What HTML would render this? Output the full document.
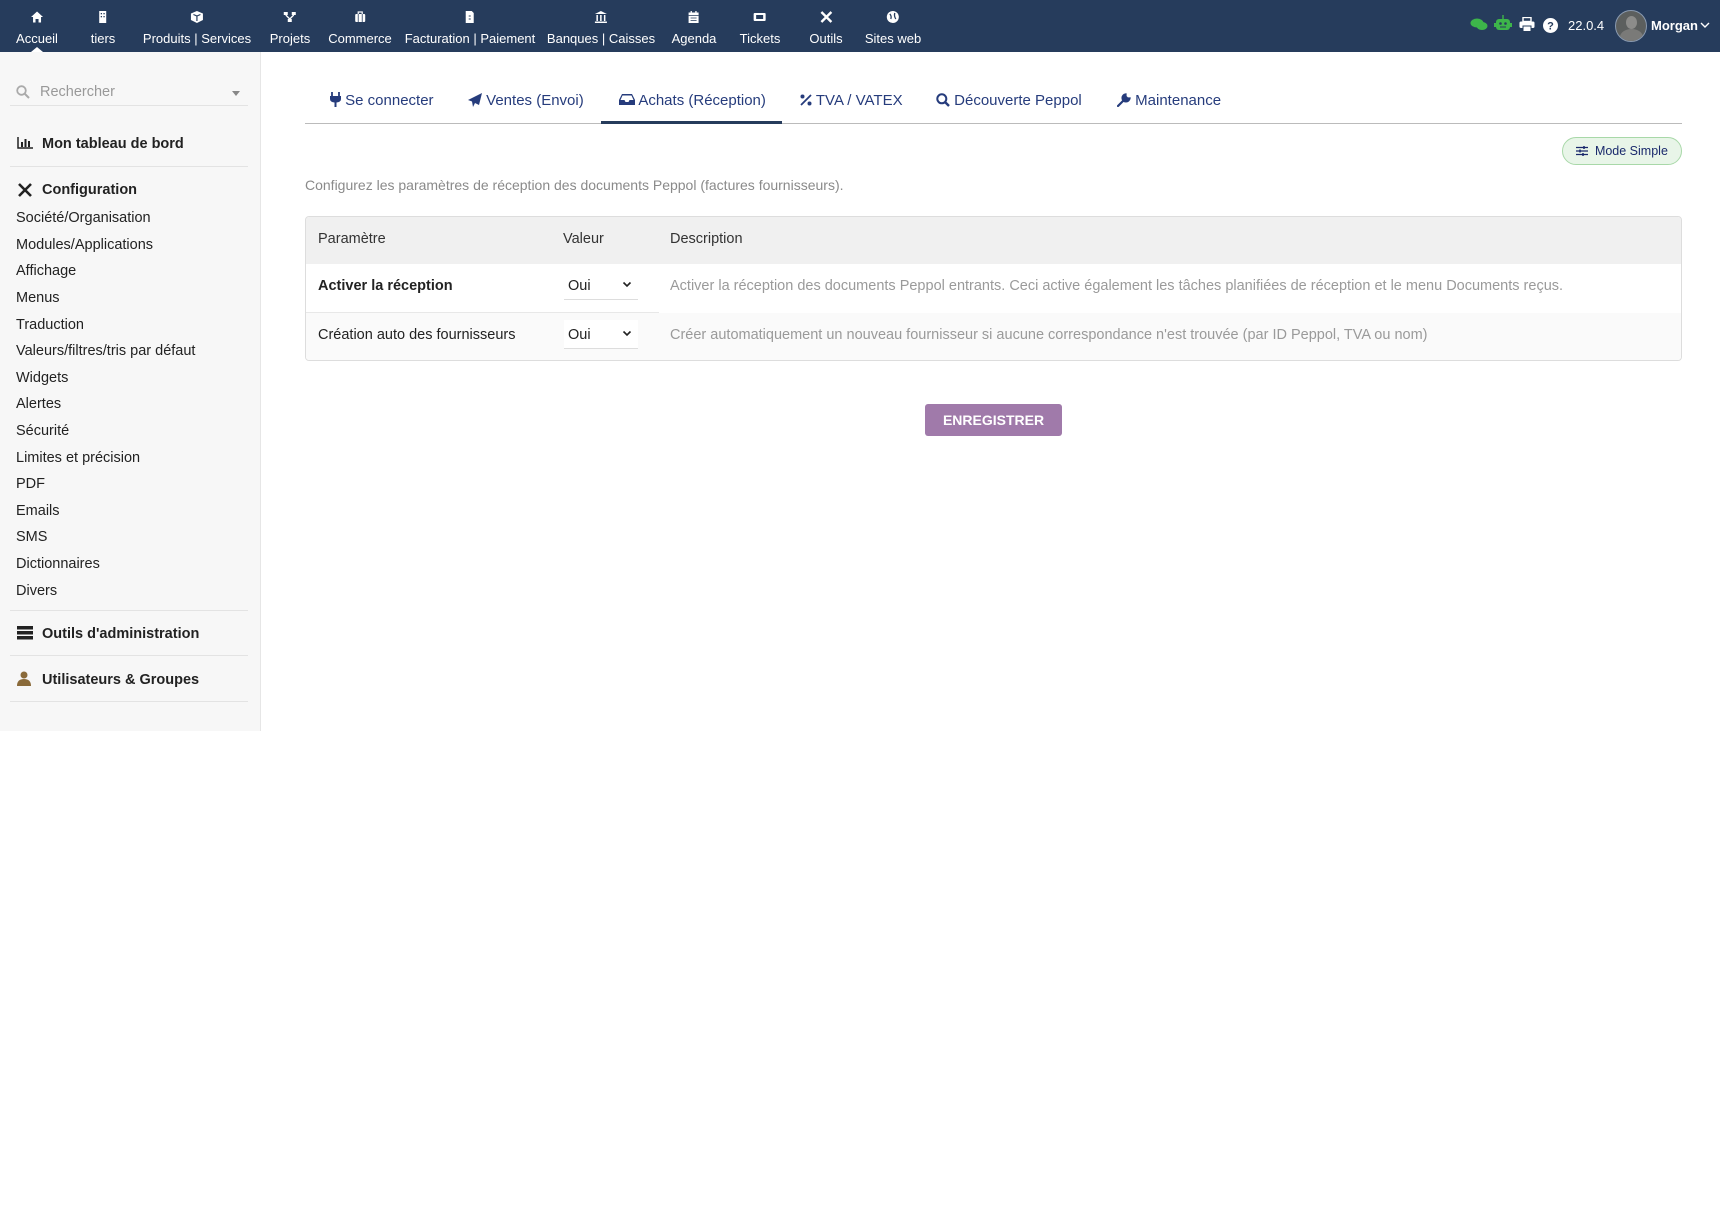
<!DOCTYPE html>
<html><head><meta charset="utf-8">
<style>
*{box-sizing:border-box;margin:0;padding:0}
body{width:1720px;height:1219px;background:#fff;font-family:"Liberation Sans",Arial,sans-serif;position:relative;overflow:hidden;color:#222}
.top{position:absolute;left:0;top:0;width:1720px;height:52px;background:#263c5c}
.nav{position:absolute;top:0;height:52px;color:#fff;font-size:13px;text-align:center;transform:translateX(-50%);white-space:nowrap}
.nav .ic{position:absolute;top:10px;left:50%;transform:translateX(-50%);width:14px;height:14px}
.nav span{display:block;padding-top:31px}
.side{position:absolute;left:0;top:52px;width:261px;height:679px;background:#f7f7f7;border-right:1px solid #e6e6e6}
.si{position:absolute;left:16px;font-size:14.5px;color:#222}
.sh{position:absolute;left:42px;font-size:14.5px;font-weight:bold;color:#222}
.sep{position:absolute;left:10px;width:238px;height:1px;background:#e3e3e3}
.tab{position:absolute;top:92px;font-size:15px;color:#263c7c;white-space:nowrap}
.abs{position:absolute}
.sel{position:absolute;left:564px;width:74px;height:29px;border-bottom:1px solid #ddd;background:#fff;font-size:14.5px;padding:7px 0 0 4px}
.sel b{position:absolute;right:6px;top:10px;font-weight:normal;font-size:12px;line-height:0}
.desc{position:absolute;left:670px;color:#9a9a9a;font-size:14.5px;white-space:nowrap}
</style></head><body>
<div class="top"></div>
<div class="nav" style="left:37px"><svg class="ic" viewBox="0 0 14 14"><path d="M1 7L7 1.5 13 7H11V12.5H8.5V9H5.5V12.5H3V7Z" fill="#fff"/></svg><span>Accueil</span></div>
<div style="position:absolute;left:31px;top:47px;width:0;height:0;border-left:6px solid transparent;border-right:6px solid transparent;border-bottom:5px solid #fff"></div>
<div class="nav" style="left:103px"><svg class="ic" viewBox="0 0 14 14"><rect x="3.5" y="1" width="7" height="12" fill="#fff"/><rect x="5" y="3" width="1.3" height="1.3" fill="#263c5c"/><rect x="7.7" y="3" width="1.3" height="1.3" fill="#263c5c"/><rect x="5" y="6" width="1.3" height="1.3" fill="#263c5c"/><rect x="7.7" y="6" width="1.3" height="1.3" fill="#263c5c"/></svg><span>tiers</span></div>
<div class="nav" style="left:197px"><svg class="ic" viewBox="0 0 14 14"><path d="M7 1L13 3.5V10L7 13 1 10V3.5Z" fill="#fff"/><path d="M3.5 4.5L7 6 10.5 4.5M7 6V11" stroke="#263c5c" stroke-width="1.2" fill="none"/></svg><span>Produits | Services</span></div>
<div class="nav" style="left:290px"><svg class="ic" viewBox="0 0 14 14"><rect x="1" y="2" width="4" height="3" fill="#fff"/><rect x="9" y="2" width="4" height="3" fill="#fff"/><rect x="5" y="9" width="4" height="3" fill="#fff"/><path d="M3 5L7 9M11 5L7 9" stroke="#fff" stroke-width="1.3"/></svg><span>Projets</span></div>
<div class="nav" style="left:360px"><svg class="ic" viewBox="0 0 14 14"><rect x="2" y="4" width="10" height="8" rx="1" fill="#fff"/><rect x="5" y="2" width="4" height="3" fill="none" stroke="#fff" stroke-width="1.2"/><path d="M5 4V12M9 4V12" stroke="#263c5c" stroke-width="0.8"/></svg><span>Commerce</span></div>
<div class="nav" style="left:470px"><svg class="ic" viewBox="0 0 14 14"><path d="M3 1H9L11 3V13H3Z" fill="#fff"/><path d="M6 6H8M6 9H8" stroke="#263c5c" stroke-width="1"/></svg><span>Facturation | Paiement</span></div>
<div class="nav" style="left:601px"><svg class="ic" viewBox="0 0 14 14"><path d="M1 4L7 1 13 4Z" fill="#fff"/><rect x="2.5" y="5" width="1.5" height="6" fill="#fff"/><rect x="6.2" y="5" width="1.5" height="6" fill="#fff"/><rect x="10" y="5" width="1.5" height="6" fill="#fff"/><rect x="1" y="11.5" width="12" height="1.5" fill="#fff"/></svg><span>Banques | Caisses</span></div>
<div class="nav" style="left:694px"><svg class="ic" viewBox="0 0 14 14"><rect x="2" y="2.5" width="10" height="10.5" fill="#fff"/><rect x="4" y="1" width="1.3" height="3" fill="#fff"/><rect x="8.7" y="1" width="1.3" height="3" fill="#fff"/><path d="M2 5.5H12M4 8H10M4 10.5H10" stroke="#263c5c" stroke-width="0.8"/></svg><span>Agenda</span></div>
<div class="nav" style="left:760px"><svg class="ic" viewBox="0 0 14 14"><rect x="1" y="3" width="12" height="8" rx="1" fill="#fff"/><rect x="3.5" y="5" width="7" height="4" fill="#263c5c"/></svg><span>Tickets</span></div>
<div class="nav" style="left:826px"><svg class="ic" viewBox="0 0 14 14"><path d="M2 2L12 12M12 2L2 12" stroke="#fff" stroke-width="2.4"/></svg><span>Outils</span></div>
<div class="nav" style="left:893px"><svg class="ic" viewBox="0 0 14 14"><circle cx="7" cy="7" r="6" fill="#fff"/><path d="M4 4Q6 6 5 9M9 3Q8 6 10 9" stroke="#263c5c" stroke-width="1.3" fill="none"/></svg><span>Sites web</span></div>

<svg class="abs" style="left:1470px;top:17px" width="18" height="14" viewBox="0 0 18 14"><ellipse cx="7" cy="6" rx="6.5" ry="4.5" fill="#3db54a"/><ellipse cx="12" cy="9" rx="5.5" ry="4" fill="#3db54a"/></svg>
<svg class="abs" style="left:1494px;top:15px" width="18" height="17" viewBox="0 0 18 17"><rect x="2" y="4" width="14" height="11" rx="3" fill="#3db54a"/><rect x="8.3" y="0" width="1.4" height="4" fill="#3db54a"/><rect x="0" y="8" width="2" height="4" fill="#3db54a"/><rect x="16" y="8" width="2" height="4" fill="#3db54a"/><circle cx="6.5" cy="8.5" r="1.3" fill="#263c5c"/><circle cx="11.5" cy="8.5" r="1.3" fill="#263c5c"/><rect x="6" y="11.5" width="6" height="1" fill="#263c5c"/></svg>
<svg class="abs" style="left:1519px;top:17px" width="16" height="15" viewBox="0 0 16 15"><rect x="4" y="0.5" width="8" height="4" fill="none" stroke="#fff" stroke-width="1.4"/><rect x="0.5" y="4.5" width="15" height="6.5" rx="1.5" fill="#fff"/><rect x="4" y="9" width="8" height="5.5" fill="#fff" stroke="#263c5c" stroke-width="1"/></svg>
<svg class="abs" style="left:1543px;top:18px" width="15" height="15" viewBox="0 0 15 15"><circle cx="7.5" cy="7.5" r="7.5" fill="#fff"/><text x="7.5" y="11.5" font-size="11" font-weight="bold" text-anchor="middle" fill="#263c5c" font-family="Liberation Sans">?</text></svg>
<div class="abs" style="left:1568px;top:18px;color:#fff;font-size:13px">22.0.4</div>
<div class="abs" style="left:1615px;top:10px;width:32px;height:32px;border-radius:50%;background:#5c5f5e;border:1px solid #8a9ab0;overflow:hidden"><div style="position:absolute;left:10px;top:5px;width:11px;height:13px;border-radius:50%;background:#8c8c8a"></div><div style="position:absolute;left:4px;top:18px;width:23px;height:16px;border-radius:50% 50% 0 0;background:#7a7a78"></div></div>
<div class="abs" style="left:1651px;top:18px;color:#fff;font-size:13px;font-weight:bold">Morgan</div>
<svg class="abs" style="left:1700px;top:22px" width="10" height="7" viewBox="0 0 10 7"><path d="M1 1L5 5 9 1" stroke="#fff" stroke-width="1.4" fill="none"/></svg>

<div class="side"></div>
<svg class="abs" style="left:16px;top:85px" width="14" height="14" viewBox="0 0 14 14"><circle cx="5.5" cy="5.5" r="4.3" stroke="#aaa" stroke-width="1.8" fill="none"/><path d="M8.5 8.5L13 13" stroke="#aaa" stroke-width="2"/></svg>
<div class="abs" style="left:40px;top:84px;font-size:14.5px;color:#999">Rechercher</div>
<div class="abs" style="left:232px;top:91px;border-left:4px solid transparent;border-right:4px solid transparent;border-top:5px solid #888"></div>
<div class="sep" style="top:105px"></div>
<svg class="abs" style="left:17px;top:137px" width="16" height="12" viewBox="0 0 16 12"><path d="M1 0V11H16" stroke="#222" stroke-width="1.5" fill="none"/><rect x="4" y="5" width="2" height="5" fill="#222"/><rect x="7.5" y="2" width="2" height="8" fill="#222"/><rect x="11" y="4" width="2" height="6" fill="#222"/></svg>
<div class="sh" style="top:136px">Mon tableau de bord</div>
<div class="sep" style="top:166px"></div>
<svg class="abs" style="left:17px;top:182px" width="16" height="16" viewBox="0 0 16 16"><path d="M2 2L14 14M14 2L2 14" stroke="#222" stroke-width="2.6"/></svg>
<div class="sh" style="top:182px">Configuration</div>
<div class="si" style="top:210px">Société/Organisation</div>
<div class="si" style="top:237px">Modules/Applications</div>
<div class="si" style="top:263px">Affichage</div>
<div class="si" style="top:290px">Menus</div>
<div class="si" style="top:317px">Traduction</div>
<div class="si" style="top:343px">Valeurs/filtres/tris par défaut</div>
<div class="si" style="top:370px">Widgets</div>
<div class="si" style="top:396px">Alertes</div>
<div class="si" style="top:423px">Sécurité</div>
<div class="si" style="top:450px">Limites et précision</div>
<div class="si" style="top:476px">PDF</div>
<div class="si" style="top:503px">Emails</div>
<div class="si" style="top:529px">SMS</div>
<div class="si" style="top:556px">Dictionnaires</div>
<div class="si" style="top:583px">Divers</div>
<div class="sep" style="top:610px"></div>
<svg class="abs" style="left:17px;top:626px" width="16" height="14" viewBox="0 0 16 14"><rect y="0" width="16" height="3.5" fill="#222"/><rect y="5" width="16" height="3.5" fill="#222"/><rect y="10" width="16" height="3.5" fill="#222"/></svg>
<div class="sh" style="top:626px">Outils d'administration</div>
<div class="sep" style="top:655px"></div>
<svg class="abs" style="left:17px;top:671px" width="14" height="15" viewBox="0 0 14 15"><circle cx="7" cy="4" r="3.5" fill="#8a6a3a"/><path d="M0 15Q0 8 7 8 14 8 14 15Z" fill="#8a6a3a"/></svg>
<div class="sh" style="top:672px">Utilisateurs &amp; Groupes</div>
<div class="sep" style="top:701px"></div>

<div class="tab" style="left:330px"><svg width="11" height="15" viewBox="0 0 11 15" style="vertical-align:-2px"><path d="M2 0V4M9 0V4" stroke="#263c7c" stroke-width="1.8"/><path d="M0 4H11V7Q11 10 6.5 10.5V15H4.5V10.5Q0 10 0 7Z" fill="#263c7c"/></svg> Se connecter</div>
<div class="tab" style="left:468px"><svg width="14" height="14" viewBox="0 0 14 14" style="vertical-align:-2px"><path d="M14 0L0 7 4 8.5 5 14 7 10 11 12Z" fill="#263c7c"/></svg> Ventes (Envoi)</div>
<div class="tab" style="left:619px"><svg width="16" height="13" viewBox="0 0 16 13" style="vertical-align:-1px"><path d="M3 1H13L16 7V12H0V7Z" fill="#263c7c"/><path d="M3.5 2.5H12.5L14.5 7H10.5L9.5 9H6.5L5.5 7H1.5Z" fill="#fff"/></svg> Achats (Réception)</div>
<div class="tab" style="left:800px"><svg width="12" height="12" viewBox="0 0 12 12" style="vertical-align:-1px"><path d="M11 1L1 11" stroke="#263c7c" stroke-width="1.8"/><circle cx="2.5" cy="2.5" r="2" fill="#263c7c"/><circle cx="9.5" cy="9.5" r="2" fill="#263c7c"/></svg> TVA / VATEX</div>
<div class="tab" style="left:936px"><svg width="14" height="14" viewBox="0 0 14 14" style="vertical-align:-2px"><circle cx="5.8" cy="5.8" r="4.5" stroke="#263c7c" stroke-width="2" fill="none"/><path d="M9 9L13 13" stroke="#263c7c" stroke-width="2.4"/></svg> Découverte Peppol</div>
<div class="tab" style="left:1117px"><svg width="14" height="14" viewBox="0 0 14 14" style="vertical-align:-2px"><path d="M1 13L8 6M8.5 1.5A3.5 3.5 0 1 0 12.5 5.5L10.5 5.5 8.5 3.5Z" stroke="#263c7c" stroke-width="2.2" fill="#263c7c" stroke-linecap="round"/></svg> Maintenance</div>
<div class="abs" style="left:305px;top:123px;width:1377px;height:1px;background:#bbb"></div>
<div class="abs" style="left:601px;top:121px;width:181px;height:3px;background:#263c5c"></div>

<div class="abs" style="left:1562px;top:137px;width:120px;height:28px;border:1px solid #a8d8a8;background:#e8f5e8;border-radius:14px;font-size:12.5px;color:#1a2a6c;padding:6px 0 0 13px;white-space:nowrap"><svg width="12" height="10" viewBox="0 0 12 10" style="vertical-align:-1px"><path d="M0 1.5H12M0 5H12M0 8.5H12" stroke="#1a2a6c" stroke-width="1.3"/><path d="M8 0V3M4 3.5V6.5M7 7V10" stroke="#1a2a6c" stroke-width="1.5"/></svg>&nbsp; Mode Simple</div>

<div class="abs" style="left:305px;top:177px;font-size:14px;color:#8a8a8a">Configurez les paramètres de réception des documents Peppol (factures fournisseurs).</div>

<div class="abs" style="left:305px;top:216px;width:1377px;height:145px;border:1px solid #ddd;border-radius:4px;overflow:hidden">
 <div style="position:absolute;left:0;top:0;width:100%;height:47px;background:#f0f0f0"></div>
 <div style="position:absolute;left:0;top:96px;width:100%;height:49px;background:#fafafa"></div>
 <div style="position:absolute;left:0;top:95px;width:353px;height:1px;background:#e8e8e8"></div>
</div>
<div class="abs" style="left:318px;top:231px;font-size:14.5px;color:#333">Paramètre</div>
<div class="abs" style="left:563px;top:231px;font-size:14.5px;color:#333">Valeur</div>
<div class="abs" style="left:670px;top:231px;font-size:14.5px;color:#333">Description</div>
<div class="abs" style="left:318px;top:278px;font-size:14.5px;font-weight:bold;color:#222">Activer la réception</div>
<div class="sel" style="top:271px">Oui<b><svg width="10" height="7" viewBox="0 0 10 7"><path d="M1.5 1.5L5 5 8.5 1.5" stroke="#222" stroke-width="1.6" fill="none"/></svg></b></div>
<div class="desc" style="top:278px">Activer la réception des documents Peppol entrants. Ceci active également les tâches planifiées de réception et le menu Documents reçus.</div>
<div class="abs" style="left:318px;top:327px;font-size:14.5px;color:#222">Création auto des fournisseurs</div>
<div class="sel" style="top:320px">Oui<b><svg width="10" height="7" viewBox="0 0 10 7"><path d="M1.5 1.5L5 5 8.5 1.5" stroke="#222" stroke-width="1.6" fill="none"/></svg></b></div>
<div class="desc" style="top:327px">Créer automatiquement un nouveau fournisseur si aucune correspondance n'est trouvée (par ID Peppol, TVA ou nom)</div>

<div class="abs" style="left:925px;top:404px;width:137px;height:32px;background:#a07aaa;border-radius:3px;color:#fff;font-size:14px;font-weight:bold;text-align:center;line-height:32px">ENREGISTRER</div>
</body></html>
